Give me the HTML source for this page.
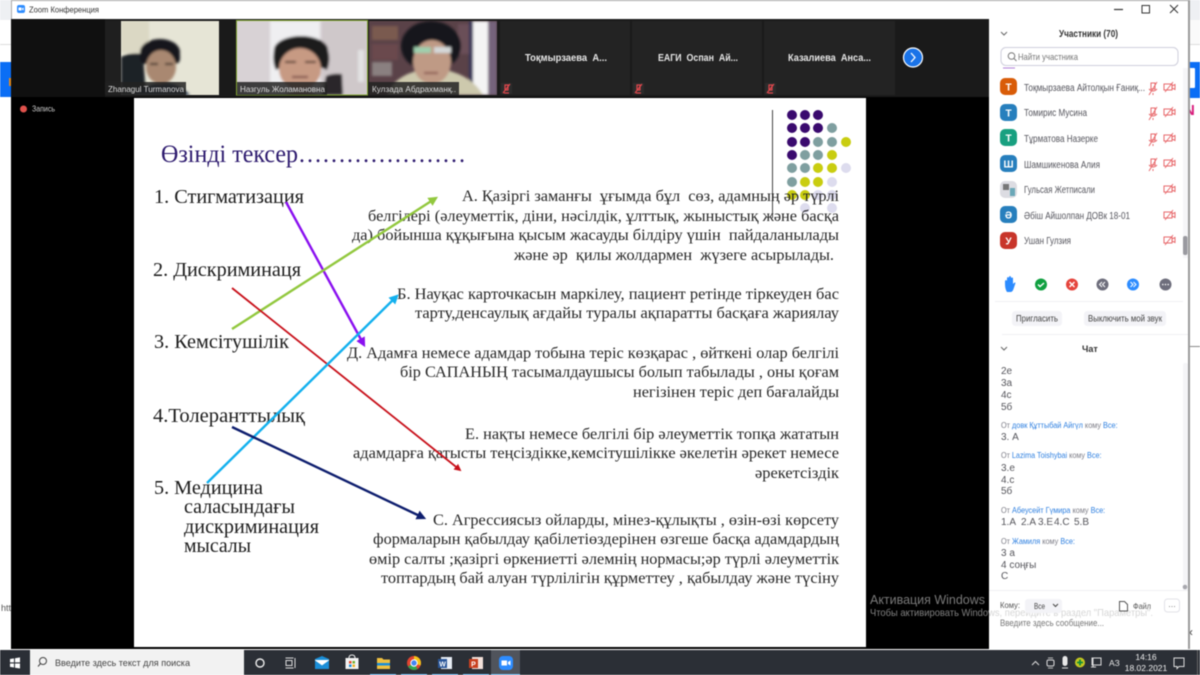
<!DOCTYPE html>
<html lang="ru"><head><meta charset="utf-8"><title>Zoom Конференция</title>
<style>
html,body{margin:0;padding:0;width:1200px;height:675px;overflow:hidden;background:#fff}
svg{display:block;filter:blur(.42px)}
text{font-family:"Liberation Sans","Noto Sans CJK SC",sans-serif;white-space:pre}
.s text{font-family:"Liberation Serif","DejaVu Serif",serif;fill:#222}
.l text{font-size:20.5px;fill:#1c1c1c}
.r text{font-size:16px;fill:#262626}
.n text{font-size:10px;fill:#56565e}
.c text{font-size:10px;fill:#55555b}
.c .f{font-size:8.5px;fill:#7b7b85}
.c tspan.b{fill:#2d7fe0}
.t text{font-size:10px;font-weight:bold;fill:#e6e6e6}
.v text{font-size:8.5px;fill:#dcdcdc}
</style></head><body>
<svg width="1200" height="675" viewBox="0 0 1200 675" xmlns="http://www.w3.org/2000/svg">
<defs>
<filter id="b"><feGaussianBlur stdDeviation="1.4"/></filter>
<clipPath id="v1"><rect x="121" y="21" width="98" height="74"/></clipPath>
<clipPath id="v2"><rect x="237" y="21" width="130" height="74"/></clipPath>
<clipPath id="v3"><rect x="369" y="21" width="128" height="74"/></clipPath>
<clipPath id="bl"><rect x="860" y="590" width="129" height="40"/></clipPath>
<clipPath id="wh"><rect x="989" y="590" width="200" height="40"/></clipPath>
<marker id="mp" markerWidth="4" markerHeight="4" refX="3" refY="2" orient="auto"><path d="M0 0L4 2L0 4z" fill="#8a10f0"/></marker>
<marker id="mg" markerWidth="4" markerHeight="4" refX="3" refY="2" orient="auto"><path d="M0 0L4 2L0 4z" fill="#92c83e"/></marker>
<marker id="mr" markerWidth="4" markerHeight="4" refX="3" refY="2" orient="auto"><path d="M0 0L4 2L0 4z" fill="#c8101a"/></marker>
<marker id="mb" markerWidth="4" markerHeight="4" refX="3" refY="2" orient="auto"><path d="M0 0L4 2L0 4z" fill="#12b0ee"/></marker>
<marker id="mn" markerWidth="4" markerHeight="4" refX="3" refY="2" orient="auto"><path d="M0 0L4 2L0 4z" fill="#0e1e6e"/></marker>
</defs>

<!-- background behind window -->
<rect width="1200" height="675" fill="#fff"/>
<rect width="11" height="20" fill="#eef0f3"/>
<rect x="0" y="44" width="11" height="1" fill="#ddd"/>
<rect x="0" y="62" width="11" height="35" fill="#0b6ef5"/>
<rect x="9" y="78" width="2" height="8" fill="#e08a20"/>
<text x="1" y="611" font-size="9" fill="#555">htt</text>
<rect x="1189" y="0" width="11" height="20" fill="#eef0f3"/>
<rect x="1189" y="20" width="11" height="24" fill="#fafafa"/>
<rect x="1189" y="44" width="11" height="1" fill="#ddd"/>
<rect x="1189" y="62" width="11" height="36" fill="#0b6ef5"/>
<rect x="1189" y="68" width="6" height="20" rx="1" fill="#fff"/>
<text x="1184" y="115" font-size="15" font-weight="bold" fill="#d81b7a">N</text>
<rect x="1189" y="346" width="11" height="1" fill="#888"/>
<text x="1189" y="636" font-size="12" fill="#444">‹</text>

<!-- zoom window -->
<rect x="11" y="0" width="1178" height="1" fill="#a6a6a6"/>
<rect x="11" y="1" width="978" height="18" fill="#fff"/>
<rect x="11" y="1" width="1" height="18" fill="#aaa"/>
<rect x="17" y="5" width="8" height="8" rx="2" fill="#2d8cff"/><path d="M18.500 7.500h3v3h-3zM22 8.500l1.600-1v3l-1.600-1z" fill="#fff"/>
<text x="29" y="12.500" font-size="8.200" fill="#333" textLength="70" lengthAdjust="spacingAndGlyphs">Zoom Конференция</text>
<rect x="11" y="19" width="978" height="630" fill="#000"/>
<rect x="11" y="19" width="978" height="78" fill="#1a1a1a"/>
<rect x="11" y="19" width="94" height="78" fill="#101010"/>
<rect x="105" y="21" width="16" height="74" fill="#1f1f1f"/>

<!-- video 1 -->
<g clip-path="url(#v1)"><rect x="121" y="21" width="98" height="74" fill="#e6e5d6"/>
<g filter="url(#b)">
<rect x="121" y="21" width="28" height="32" fill="#dbd8c4"/>
<path d="M121 57Q130 52 143 54L146 95H121z" fill="#1f2428"/>
<ellipse cx="160" cy="52" rx="20" ry="13" fill="#18181c"/>
<rect x="140" y="50" width="40" height="14" rx="5" fill="#18181c"/>
<ellipse cx="161" cy="67" rx="15" ry="17" fill="#a98871"/>
<rect x="150" y="63" width="8" height="2" fill="#3a2a25"/><rect x="165" y="63" width="8" height="2" fill="#3a2a25"/>
<path d="M135 95Q150 82 160 84Q175 80 190 95z" fill="#20304a"/>
</g></g>
<!-- video 2 -->
<g clip-path="url(#v2)"><rect x="237" y="21" width="130" height="74" fill="#d8d2d5"/>
<g filter="url(#b)">
<rect x="270" y="21" width="50" height="74" fill="#efeff1"/>
<rect x="322" y="21" width="45" height="74" fill="#cfc8ca"/>
<rect x="358" y="50" width="6" height="32" fill="#e2e2e2"/>
<path d="M326 76Q332 73 342 74L343 95H322z" fill="#2a282c"/>
<ellipse cx="301" cy="50" rx="27" ry="14" fill="#1f1a1c"/>
<path d="M274 50Q272 62 276 70L284 66L318 66L327 70Q331 60 328 50z" fill="#1f1a1c"/>
<ellipse cx="300" cy="69" rx="21" ry="21" fill="#c79a83"/>
<path d="M284 95Q300 86 318 95z" fill="#a9806a"/>
<rect x="285" y="61" width="11" height="2" fill="#4a3028"/><rect x="305" y="61" width="11" height="2" fill="#4a3028"/>
<rect x="292" y="76" width="16" height="2" fill="#7a4a44"/>
</g></g>
<rect x="236.500" y="20.500" width="131" height="74.500" fill="none" stroke="#7fa22f" stroke-width="1"/>
<!-- video 3 -->
<g clip-path="url(#v3)"><rect x="369" y="21" width="128" height="74" fill="#5a4248"/>
<g filter="url(#b)">
<rect x="372" y="26" width="26" height="14" fill="#7a5a50"/><rect x="372" y="44" width="26" height="16" fill="#6a4a4e"/><rect x="372" y="62" width="20" height="14" fill="#8a8080"/>
<rect x="458" y="24" width="14" height="30" fill="#6a5058"/>
<rect x="473" y="21" width="15" height="74" fill="#f4f4f4"/><rect x="488" y="21" width="9" height="74" fill="#75637c"/>
<rect x="469" y="21" width="4" height="74" fill="#35365a"/>
<path d="M387 95Q394 76 420 70H446Q472 76 483 95z" fill="#cdc9ad"/>
<ellipse cx="431" cy="46" rx="30" ry="25" fill="#14141a"/>
<ellipse cx="432" cy="62" rx="19" ry="22" fill="#bf9a85"/>
<rect x="414" y="47" width="17" height="6" fill="#9fcfae"/><rect x="434" y="47" width="17" height="6" fill="#d4d8d8"/>
<rect x="424" y="72" width="14" height="2" fill="#8a5550"/>
</g></g>
<g class="v">
<rect x="105" y="82" width="81" height="13" fill="#222" opacity=".85"/>
<text x="108" y="92" textLength="76" lengthAdjust="spacingAndGlyphs">Zhanagul Turmanova</text>
<rect x="237" y="82" width="90" height="13" fill="#222" opacity=".85"/>
<text x="240" y="92" textLength="85" lengthAdjust="spacingAndGlyphs">Назгуль Жоламановна</text>
<rect x="369" y="82" width="90" height="13" fill="#222" opacity=".85"/>
<text x="372" y="92" textLength="84" lengthAdjust="spacingAndGlyphs">Кулзада Абдрахманқ..</text>
</g>
<!-- tiles -->
<rect x="500" y="21" width="130" height="74" fill="#232323"/>
<rect x="632" y="21" width="130" height="74" fill="#232323"/>
<rect x="764" y="21" width="131" height="74" fill="#232323"/>
<g class="t">
<text x="525" y="61" textLength="82" lengthAdjust="spacingAndGlyphs">Тоқмырзаева  А...</text>
<text x="658" y="61" textLength="80" lengthAdjust="spacingAndGlyphs">ЕАГИ  Оспан  Ай...</text>
<text x="788" y="61" textLength="83" lengthAdjust="spacingAndGlyphs">Казалиева  Анса...</text>
</g>
<g fill="#2c2c2c"><rect x="501" y="83" width="11" height="11"/><rect x="633" y="83" width="11" height="11"/><rect x="765" y="83" width="11" height="11"/></g>
<g stroke="#e0474c" stroke-width="1.200" fill="none">
<path d="M505 85h3v5h-3zM503 93l7-9M504 93h5"/><path d="M637 85h3v5h-3zM635 93l7-9M636 93h5"/><path d="M769 85h3v5h-3zM767 93l7-9M768 93h5"/>
</g>
<circle cx="913" cy="57.500" r="9.500" fill="#1a73e8" stroke="#fff" stroke-width="1.200"/>
<path d="M911 53l4 4.500l-4 4.500" stroke="#fff" stroke-width="1.300" fill="none"/>
<circle cx="23.500" cy="109" r="3.500" fill="#e0524c"/>
<text x="32" y="111.500" font-size="8" fill="#ccc" textLength="23" lengthAdjust="spacingAndGlyphs">Запись</text>

<!-- slide -->
<rect x="134" y="98" width="732" height="549" fill="#fff"/>
<rect x="772" y="110" width="1" height="108" fill="#444"/>
<g fill="#3a0a6e"><circle cx="792" cy="115" r="5"/><circle cx="805" cy="115" r="5"/><circle cx="818" cy="115" r="5"/><circle cx="792" cy="128" r="5"/><circle cx="805" cy="128" r="5"/><circle cx="818" cy="128" r="5"/><circle cx="792" cy="142" r="5"/><circle cx="805" cy="142" r="5"/><circle cx="792" cy="155" r="5"/></g>
<g fill="#7f9fa0"><circle cx="832" cy="128" r="5"/><circle cx="818" cy="142" r="5"/><circle cx="832" cy="142" r="5"/><circle cx="805" cy="155" r="5"/><circle cx="818" cy="155" r="5"/><circle cx="792" cy="168" r="5"/><circle cx="805" cy="168" r="5"/><circle cx="792" cy="182" r="5"/></g>
<g fill="#c9cd10"><circle cx="846" cy="142" r="5"/><circle cx="832" cy="155" r="5"/><circle cx="818" cy="168" r="5"/><circle cx="832" cy="168" r="5"/><circle cx="805" cy="182" r="5"/><circle cx="818" cy="182" r="5"/><circle cx="792" cy="195" r="5"/><circle cx="805" cy="195" r="5"/></g>
<g fill="#dddcee"><circle cx="846" cy="168" r="5"/><circle cx="832" cy="182" r="5"/><circle cx="818" cy="195" r="5"/><circle cx="832" cy="195" r="5"/><circle cx="805" cy="208" r="5"/><circle cx="832" cy="208" r="5"/></g>
<g class="s">
<text x="161" y="162" font-size="25" style="fill:#2d1a6e" textLength="305" lengthAdjust="spacingAndGlyphs">Өзінді тексер…………………</text>
<g class="l">
<text x="154" y="203" textLength="150" lengthAdjust="spacingAndGlyphs">1. Стигматизация</text>
<text x="153" y="276" textLength="148" lengthAdjust="spacingAndGlyphs">2. Дискриминаця</text>
<text x="154" y="348" textLength="135" lengthAdjust="spacingAndGlyphs">3. Кемсітушілік</text>
<text x="153" y="422" textLength="152" lengthAdjust="spacingAndGlyphs">4.Толеранттылық</text>
<text x="154" y="494" textLength="109" lengthAdjust="spacingAndGlyphs">5. Медицина</text>
<text x="184" y="513" textLength="111" lengthAdjust="spacingAndGlyphs">саласындағы</text>
<text x="184" y="533" textLength="135" lengthAdjust="spacingAndGlyphs">дискриминация</text>
<text x="184" y="552" textLength="67" lengthAdjust="spacingAndGlyphs">мысалы</text>
</g>
<g class="r">
<text x="462" y="201" textLength="377" lengthAdjust="spacingAndGlyphs">А. Қазіргі заманғы  ұғымда бұл  сөз, адамның әр түрлі</text>
<text x="368" y="221" textLength="471" lengthAdjust="spacingAndGlyphs">белгілері (әлеуметтік, діни, нәсілдік, ұлттық, жыныстық және басқа</text>
<text x="352" y="240" textLength="487" lengthAdjust="spacingAndGlyphs">да) бойынша құқығына қысым жасауды білдіру үшін  пайдаланылады</text>
<text x="514" y="260" textLength="320" lengthAdjust="spacingAndGlyphs">және әр  қилы жолдармен  жүзеге асырылады.</text>
<text x="397" y="299" textLength="442" lengthAdjust="spacingAndGlyphs">Б. Науқас карточкасын маркілеу, пациент ретінде тіркеуден бас</text>
<text x="415" y="318" textLength="424" lengthAdjust="spacingAndGlyphs">тарту,денсаулық ағдайы туралы ақпаратты басқаға жариялау</text>
<text x="347" y="358" textLength="492" lengthAdjust="spacingAndGlyphs">Д. Адамға немесе адамдар тобына теріс көзқарас , өйткені олар белгілі</text>
<text x="400" y="377" textLength="439" lengthAdjust="spacingAndGlyphs">бір САПАНЫҢ тасымалдаушысы болып табылады , оны қоғам</text>
<text x="633" y="397" textLength="206" lengthAdjust="spacingAndGlyphs">негізінен теріс деп бағалайды</text>
<text x="465" y="439" textLength="374" lengthAdjust="spacingAndGlyphs">Е. нақты немесе белгілі бір әлеуметтік топқа жататын</text>
<text x="353" y="458" textLength="486" lengthAdjust="spacingAndGlyphs">адамдарға қатысты теңсіздікке,кемсітушілікке әкелетін әрекет немесе</text>
<text x="755" y="478" textLength="84" lengthAdjust="spacingAndGlyphs">әрекетсіздік</text>
<text x="433" y="525" textLength="406" lengthAdjust="spacingAndGlyphs">С. Агрессиясыз ойларды, мінез-құлықты , өзін-өзі көрсету</text>
<text x="373" y="544" textLength="466" lengthAdjust="spacingAndGlyphs">формаларын қабылдау қабілетіөздерінен өзгеше басқа адамдардың</text>
<text x="369" y="564" textLength="470" lengthAdjust="spacingAndGlyphs">өмір салты ;қазіргі өркениетті әлемнің нормасы;әр түрлі әлеуметтік</text>
<text x="381" y="583" textLength="458" lengthAdjust="spacingAndGlyphs">топтардың бай алуан түрлілігін құрметтеу , қабылдау және түсіну</text>
</g>
</g>
<g fill="none">
<path d="M286 202L364 345" stroke="#8a10f0" stroke-width="2.400" marker-end="url(#mp)"/>
<path d="M232 329L436 198" stroke="#92c83e" stroke-width="2.400" marker-end="url(#mg)"/>
<path d="M232 288L460 470" stroke="#c8101a" stroke-width="1.800" marker-end="url(#mr)"/>
<path d="M207 483L397 296" stroke="#12b0ee" stroke-width="2.400" marker-end="url(#mb)"/>
<path d="M232 427L424 518" stroke="#0e1e6e" stroke-width="2.400" marker-end="url(#mn)"/>
</g>
<text x="870" y="604" font-size="13" fill="#7a7a7a" textLength="115" lengthAdjust="spacingAndGlyphs">Активация Windows</text>
<text clip-path="url(#bl)" x="870" y="616" font-size="10.500" fill="#808080" textLength="283" lengthAdjust="spacingAndGlyphs">Чтобы активировать Windows, перейдите в раздел "Параметры".</text>

<!-- right panel -->
<rect x="989" y="0" width="200" height="649" fill="#fff"/>
<rect x="989" y="0" width="200" height="1" fill="#a6a6a6"/>
<rect x="1188" y="0" width="2" height="649" fill="#9a9a9a"/>
<g stroke="#333" fill="none"><path d="M1114 9.500h9" stroke-width="1.200"/><rect x="1142" y="5.500" width="7.500" height="7.500"/><path d="M1170 5l8 8M1178 5l-8 8" stroke-width="1"/></g>
<path d="M1001 32l3 3l3-3" stroke="#666" fill="none"/>
<text x="1059" y="37" font-size="10" font-weight="bold" fill="#333" textLength="59" lengthAdjust="spacingAndGlyphs">Участники (70)</text>
<rect x="1001" y="47.500" width="177" height="18" rx="5" fill="#fff" stroke="#cfcfdc"/>
<circle cx="1011.500" cy="56" r="3.300" fill="none" stroke="#777"/><path d="M1014 58.500l2.500 2.500" stroke="#777"/>
<text x="1018" y="60" font-size="9.500" fill="#777" textLength="60" lengthAdjust="spacingAndGlyphs">Найти участника</text>
<path d="M1003 68h12" stroke="#b080d8" stroke-width="1"/>
<g font-weight="bold" font-size="10" fill="#fff" text-anchor="middle">
<rect x="1000" y="78" width="17" height="17" rx="5" fill="#d95c08"/><text x="1008.500" y="90.500">Т</text>
<rect x="1000" y="104" width="17" height="17" rx="5" fill="#277fbd"/><text x="1008.500" y="116.500">Т</text>
<rect x="1000" y="129" width="17" height="17" rx="5" fill="#18a080"/><text x="1008.500" y="141.500">Т</text>
<rect x="1000" y="155" width="17" height="17" rx="5" fill="#277fbd"/><text x="1008.500" y="167.500">Ш</text>
<rect x="1000" y="181" width="17" height="17" rx="5" fill="#dcdce2"/><rect x="1003" y="184" width="6" height="6" fill="#777"/><rect x="1010" y="188" width="5" height="8" fill="#6aa8b8"/>
<rect x="1000" y="206" width="17" height="17" rx="5" fill="#277fbd"/><text x="1008.500" y="218.500">Ә</text>
<rect x="1000" y="232" width="17" height="17" rx="5" fill="#c8352a"/><text x="1008.500" y="244.500">У</text>
</g>
<g class="n">
<text x="1024" y="91" textLength="121" lengthAdjust="spacingAndGlyphs">Тоқмырзаева Айтолқын Ғаниқ...</text>
<text x="1024" y="116" textLength="63" lengthAdjust="spacingAndGlyphs">Томирис Мусина</text>
<text x="1024" y="142" textLength="74" lengthAdjust="spacingAndGlyphs">Тұрматова Назерке</text>
<text x="1024" y="168" textLength="76" lengthAdjust="spacingAndGlyphs">Шамшикенова Алия</text>
<text x="1024" y="193" textLength="71" lengthAdjust="spacingAndGlyphs">Гульсая Жетписали</text>
<text x="1024" y="219" textLength="106" lengthAdjust="spacingAndGlyphs">Әбіш Айшолпан ДОВк 18-01</text>
<text x="1024" y="244" textLength="47" lengthAdjust="spacingAndGlyphs">Ушан Гулзия</text>
</g>
<g stroke="#e8696c" fill="none" stroke-width="1">
<path d="M1151 83h4v6h-4zM1149 89q4 4 8 0M1153 93v2M1149 95l8-13"/>
<path d="M1151 108h4v6h-4zM1149 114q4 4 8 0M1153 118v2M1149 120l8-13"/>
<path d="M1151 134h4v6h-4zM1149 140q4 4 8 0M1153 144v2M1149 146l8-13"/>
<path d="M1151 159h4v6h-4zM1149 165q4 4 8 0M1153 169v2M1149 171l8-13"/>
<path d="M1164 84h8v6h-8zM1172 86l3-1.500v5l-3-1.500M1165 92l8-10"/>
<path d="M1164 109h8v6h-8zM1172 111l3-1.500v5l-3-1.500M1165 117l8-10"/>
<path d="M1164 135h8v6h-8zM1172 137l3-1.500v5l-3-1.500M1165 143l8-10"/>
<path d="M1164 160h8v6h-8zM1172 162l3-1.500v5l-3-1.500M1165 168l8-10"/>
<path d="M1164 186h8v6h-8zM1172 188l3-1.500v5l-3-1.500M1165 194l8-10"/>
<path d="M1164 212h8v6h-8zM1172 214l3-1.500v5l-3-1.500M1165 220l8-10"/>
<path d="M1164 237h8v6h-8zM1172 239l3-1.500v5l-3-1.500M1165 245l8-10"/>
</g>
<rect x="1183" y="68" width="5" height="190" fill="#f6f6f8"/>
<rect x="1183" y="236" width="4.500" height="19" rx="2" fill="#9a9aa0"/>

<!-- reactions -->
<path d="M1007 292q-2-3-2-8l0-3q1-2 2 0v-3q1-2 2 0v-1q1-2 2 0v1q1-1 2 0v6l1-1q1-1 1.500 0l-2 6q-1 3-3 3z" fill="#2d8cff"/>
<circle cx="1041" cy="284.500" r="6" fill="#10a040"/><path d="M1038 284.500l2 2l4-3.500" stroke="#fff" stroke-width="1.400" fill="none"/>
<circle cx="1072" cy="284.500" r="6" fill="#e5443c"/><path d="M1069.500 282l5 5M1074.500 282l-5 5" stroke="#fff" stroke-width="1.400"/>
<circle cx="1102.500" cy="284.500" r="6" fill="#6e6e7c"/><path d="M1102 282l-2.500 2.500l2.500 2.500M1105 282l-2.500 2.500l2.500 2.500" stroke="#fff" fill="none"/>
<circle cx="1133" cy="284.500" r="6" fill="#2d8cff"/><path d="M1130.500 282l2.500 2.500l-2.500 2.500M1133.500 282l2.500 2.500l-2.500 2.500" stroke="#fff" fill="none"/>
<circle cx="1165.500" cy="284.500" r="6" fill="#6e6e7c"/><g fill="#fff"><circle cx="1162.800" cy="284.500" r=".8"/><circle cx="1165.500" cy="284.500" r=".8"/><circle cx="1168.200" cy="284.500" r=".8"/></g>
<rect x="995" y="301" width="188" height="1" fill="#f0f0f3"/>
<rect x="1012" y="311" width="50" height="15" rx="3.500" fill="#f3f3f7"/>
<text x="1016" y="321.500" font-size="9" fill="#444" textLength="42" lengthAdjust="spacingAndGlyphs">Пригласить</text>
<rect x="1084" y="311" width="82" height="15" rx="3.500" fill="#f3f3f7"/>
<text x="1088" y="321.500" font-size="9" fill="#444" textLength="74" lengthAdjust="spacingAndGlyphs">Выключить мой звук</text>
<rect x="1002" y="334" width="186" height="1" fill="#f0f0f3"/>
<path d="M1001 347l3 3l3-3" stroke="#666" fill="none"/>
<text x="1082" y="352" font-size="9" font-weight="bold" fill="#333">Чат</text>

<!-- chat -->
<rect x="1183" y="363" width="5" height="228" rx="2" fill="#f5f5f7"/>
<circle cx="1185" cy="587" r="2.300" fill="#a8a8ae"/>
<g class="c">
<text x="1001" y="374">2е</text><text x="1001" y="386">3а</text><text x="1001" y="398">4с</text><text x="1001" y="410">5б</text>
<text class="f" transform="translate(1001 428) scale(.86 1)">От <tspan class="b">довк Құттыбай Айгүл</tspan> кому <tspan class="b">Все:</tspan></text>
<text x="1001" y="440">3. А</text>
<text class="f" transform="translate(1001 458) scale(.85 1)">От <tspan class="b">Lazima Toishybai</tspan> кому <tspan class="b">Все:</tspan></text>
<text x="1001" y="471">3.е</text><text x="1001" y="483">4.с</text><text x="1001" y="494">5б</text>
<text class="f" transform="translate(1001 513) scale(.86 1)">От <tspan class="b">Абеусейт Гүмира</tspan> кому <tspan class="b">Все:</tspan></text>
<text x="1001" y="525">1.А</text><text x="1021" y="525">2.А</text><text x="1038" y="525">3.Е</text><text x="1054" y="525">4.С</text><text x="1074" y="525">5.В</text>
<text class="f" transform="translate(1001 544) scale(.86 1)">От <tspan class="b">Жамиля</tspan> кому <tspan class="b">Все:</tspan></text>
<text x="1001" y="556">3 а</text><text x="1001" y="568">4 соңғы</text><text x="1001" y="579">С</text>
</g>
<rect x="989" y="590" width="199" height="1" fill="#f0f0f3"/>
<text clip-path="url(#wh)" x="870" y="616" font-size="10.500" fill="#d6d6d6" textLength="283" lengthAdjust="spacingAndGlyphs">Чтобы активировать Windows, перейдите в раздел "Параметры".</text>
<text x="1000" y="608" font-size="8.500" fill="#555" textLength="20" lengthAdjust="spacingAndGlyphs">Кому:</text>
<rect x="1025" y="599" width="37" height="14" rx="3" fill="#f3f3f7"/>
<text x="1034" y="609" font-size="8.500" fill="#444" textLength="11" lengthAdjust="spacingAndGlyphs">Все</text>
<path d="M1053 604l2.500 2.500l2.500-2.500" stroke="#444" fill="none"/>
<path d="M1119.500 601.500h5l3 3v6.500h-8z" fill="none" stroke="#555"/>
<text x="1133" y="609" font-size="8.500" fill="#555" textLength="18" lengthAdjust="spacingAndGlyphs">Файл</text>
<rect x="1164.500" y="599" width="15" height="13" rx="3" fill="#fff" stroke="#e2e2e8"/>
<text x="1168" y="607" font-size="8" fill="#666">…</text>
<text x="1000" y="626" font-size="9" fill="#777" textLength="104" lengthAdjust="spacingAndGlyphs">Введите здесь сообщение...</text>

<!-- taskbar -->
<rect x="0" y="650" width="1200" height="25" fill="#2b2f36"/>
<g fill="#fff"><path d="M10 659l4-.6v4h-4zM15 658.200l5-.8v5h-5zM10 663.500h4v4l-4-.6zM15 663.500h5v5l-5-.8z"/></g>
<rect x="30" y="650" width="214" height="25" fill="#f2f2f2"/>
<circle cx="43" cy="661" r="3.500" fill="none" stroke="#444"/><path d="M40.500 663.500l-2.500 3" stroke="#444"/>
<text x="55" y="666" font-size="9.500" fill="#444" textLength="135" lengthAdjust="spacingAndGlyphs">Введите здесь текст для поиска</text>
<circle cx="260" cy="663" r="4" fill="none" stroke="#eee" stroke-width="1.400"/>
<g fill="none" stroke="#ddd"><rect x="286" y="660.500" width="6" height="5"/><path d="M285.500 658h8M285.500 668h8M295 658v10"/></g>
<path d="M315 659l7-3l7 3v10h-14z" fill="#1a8ed8"/><path d="M315 660l7 5l7-5" fill="#fff" stroke="#fff" stroke-width=".6"/>
<rect x="345.500" y="658" width="13" height="11" fill="#f2f2f2"/><path d="M349 658q0-3 3-3t3 3" stroke="#f2f2f2" fill="none"/>
<rect x="349" y="661" width="2.500" height="2.500" fill="#e84a2a"/><rect x="352.500" y="661" width="2.500" height="2.500" fill="#70b030"/><rect x="349" y="664.500" width="2.500" height="2.500" fill="#1a8ed8"/><rect x="352.500" y="664.500" width="2.500" height="2.500" fill="#f0b020"/>
<path d="M377 658h5l1.500 1.500h6.500v9.500h-13z" fill="#f0c040"/><rect x="377" y="663" width="13" height="2.500" fill="#1a8ed8"/>
<circle cx="414" cy="663" r="7" fill="#e0432f"/><path d="M414 663l-6 3.500a7 7 0 0 0 9.500 2.500z" fill="#2fa84f"/><path d="M414 656a7 7 0 0 1 6.500 9.500l-6.500-2.500z" fill="#f5c518"/><circle cx="414" cy="663" r="3.200" fill="#4285f4" stroke="#fff"/>
<rect x="441" y="657" width="11" height="12" fill="#e8edf5"/><rect x="438" y="659" width="9" height="9" fill="#2a5699"/><text x="442.500" y="666.500" font-size="7" font-weight="bold" fill="#fff" text-anchor="middle">W</text>
<rect x="472" y="657" width="11" height="12" fill="#f3e1da"/><rect x="469" y="659" width="9" height="9" fill="#c8401f"/><text x="473.500" y="666.500" font-size="7" font-weight="bold" fill="#fff" text-anchor="middle">P</text>
<rect x="491" y="650" width="29" height="25" fill="#50545c"/>
<rect x="499" y="656" width="14" height="14" rx="4" fill="#2d8cff"/><path d="M501.500 660.500h5.500v5h-5.500zM508 662l2.500-1.500v5l-2.500-1.500z" fill="#fff"/>
<g fill="#6cb4ee"><rect x="370" y="674" width="26" height="1"/><rect x="401" y="674" width="26" height="1"/><rect x="432" y="674" width="26" height="1"/><rect x="463" y="674" width="26" height="1"/><rect x="491" y="674" width="29" height="1"/></g>
<!-- tray -->
<path d="M1032 665l3.500-3.500l3.500 3.500" stroke="#ddd" fill="none"/>
<rect x="1047" y="660" width="7" height="6" rx="1.500" fill="none" stroke="#ddd"/><path d="M1048 658h5M1048 668h5" stroke="#bbb"/>
<rect x="1062.500" y="656" width="5" height="10" rx="2.500" fill="#e8e8e8"/><path d="M1062 668h6" stroke="#ddd"/>
<circle cx="1080" cy="662.500" r="5" fill="#c6c820"/><path d="M1077 662.500h6M1080 659.500v6" stroke="#108a3a" stroke-width="1.800"/>
<rect x="1092" y="658" width="9" height="7" fill="none" stroke="#ddd"/><path d="M1091 667h5M1093 658v9" stroke="#ddd"/>
<text x="1109" y="666" font-size="8.500" fill="#e8e8e8">АЗ</text>
<text x="1146" y="660" font-size="8.500" fill="#eee" text-anchor="middle">14:16</text>
<text x="1146" y="671" font-size="8.500" fill="#eee" text-anchor="middle">18.02.2021</text>
<path d="M1174 658h10v8.500h-5l-2 2v-2h-3z" fill="none" stroke="#ddd"/>
<rect x="1197" y="650" width="1" height="25" fill="#666"/>
</svg>
</body></html>
